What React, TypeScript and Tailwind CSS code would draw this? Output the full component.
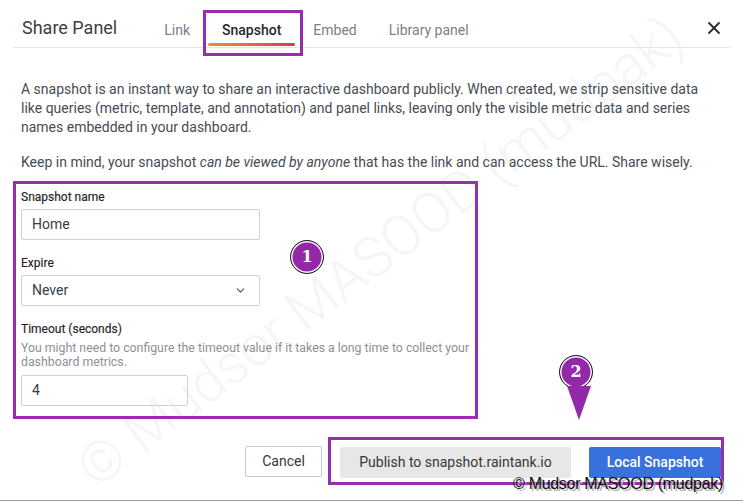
import { X, ChevronDown } from "lucide-react";

const tabs = ["Link", "Snapshot", "Embed", "Library panel"];

function Badge({ n }: { n: string }) {
  return (
    <div className="flex h-[34px] w-[34px] items-center justify-center rounded-full border border-[#222] bg-[#9328a8] shadow-[inset_0_0_0_1.5px_#ffffff] font-['DejaVu_Serif',serif] text-[16px] font-bold text-white">
      {n}
    </div>
  );
}

function Field({ label, children, hint }: { label: string; children: React.ReactNode; hint?: string }) {
  return (
    <div className="flex flex-col">
      <label className="text-[12px] leading-[16px] text-[#1f2226] [-webkit-text-stroke:0.15px_#1f2226]">{label}</label>
      {hint && (
        <p className="mt-[4px] w-[455px] text-[12.3px] leading-[14px] text-[#8d9096]">{hint}</p>
      )}
      <div className={hint ? "mt-[6px]" : "mt-[4px]"}>{children}</div>
    </div>
  );
}

export default function App() {
  return (
    <div className="relative h-[503px] w-[743px] overflow-hidden bg-white font-['Roboto',sans-serif] text-[#464c54]">
      {/* diagonal watermark */}
      <div className="pointer-events-none absolute left-[380px] top-[252px] -translate-x-1/2 -translate-y-1/2 -rotate-[37deg] whitespace-nowrap font-['Roboto',sans-serif] text-[56px] font-light text-[#f5f5f5]">
        © Mudsor MASOOD (mudpak)
      </div>

      <div className="relative flex flex-col">
        {/* header */}
        <div className="mx-[13px] flex h-[48px] items-end border-b border-[#e6e6e6]">
          <div className="flex h-[48px] flex-1 items-center pt-[8px]">
            <h1 className="pl-[9px] text-[18px] text-[#3c4046]">Share Panel</h1>
            <div className="ml-[31px] flex h-[40px] translate-y-[3px] items-stretch">
              {tabs.map((t) => (
                <div key={t} className={"relative flex items-center px-[16px] text-[14px] " + (t === "Snapshot" ? "font-medium text-[#24292e]" : "text-[#7b8087]")}>
                  {t}
                  {t === "Snapshot" && (
                    <>
                      <span className="absolute bottom-[4px] left-[2px] right-[2px] h-[3px] rounded-full bg-gradient-to-r from-[#f5873a] to-[#e0344c]" />
                      <span className="absolute -bottom-[6px] -left-[3px] -right-[6px] top-0 border-[3px] border-[#9a2dae]" />
                    </>
                  )}
                </div>
              ))}
            </div>
          </div>
          <button className="mb-[9px] mr-[6px] text-[#2a2d31]">
            <X size={20} strokeWidth={2.2} />
          </button>
        </div>

        {/* body */}
        <div className="mt-[32px] px-[21px] text-[14px] leading-[19px] text-[#464c54]">
          <p>
            A snapshot is an instant way to share an interactive dashboard publicly. When created, we strip sensitive data
            like queries (metric, template, and annotation) and panel links, leaving only the visible metric data and series
            names embedded in your dashboard.
          </p>
          <p className="mt-[16px]">
            Keep in mind, your snapshot <em>can be viewed by anyone</em> that has the link and can access the URL. Share wisely.
          </p>
        </div>

        {/* form */}
        <div className="relative ml-[13px] mt-[9px] flex w-[465px] flex-col gap-[15px] border-[3px] border-[#9a2dae] px-[5px] pb-[10px] pt-[5px]">
          <Field label="Snapshot name">
            <div className="flex h-[31px] w-[239px] items-center rounded-[2px] border border-[#cfd1d4] px-[10px] text-[14px] text-[#3a3e44]">Home</div>
          </Field>
          <Field label="Expire">
            <div className="flex h-[31px] w-[239px] items-center justify-between rounded-[2px] border border-[#cfd1d4] pl-[10px] pr-[12px] text-[14px] text-[#3a3e44]">
              Never
              <ChevronDown size={13} strokeWidth={2} className="text-[#555]" />
            </div>
          </Field>
          <Field label="Timeout (seconds)" hint="You might need to configure the timeout value if it takes a long time to collect your dashboard metrics.">
            <div className="flex h-[31px] w-[167px] items-center rounded-[2px] border border-[#cfd1d4] px-[10px] text-[14px] text-[#3a3e44]">4</div>
          </Field>
          <div className="absolute left-[274px] top-[56px]">
            <Badge n="1" />
          </div>
        </div>

        {/* footer buttons */}
        <div className="mr-[19px] mt-[18px] flex items-center justify-end gap-[6px]">
          <button className="h-[31px] w-[77px] rounded-[2px] border border-[#c7c9cc] bg-white text-[14px] text-[#34383e]">Cancel</button>
          <div className="relative flex items-center gap-[18px] border-[3px] border-[#9a2dae] pb-[4px] pl-[9px] pt-[7px]">
            <button className="h-[31px] w-[231px] rounded-[2px] bg-[#e7e7e7] text-[14px] text-[#34383e]">Publish to snapshot.raintank.io</button>
            <button className="h-[31px] w-[132px] rounded-[2px] bg-[#3871dc] text-[14px] font-medium text-white">Local Snapshot</button>
            <div className="absolute -top-[85px] left-[228px] flex flex-col items-center">
              <Badge n="2" />
              <svg width="24" height="34" viewBox="0 0 24 34" className="-mt-[3px] ml-[6px]">
                <polygon points="0,0 24,0 12,34" fill="#9328a8" />
              </svg>
            </div>
          </div>
        </div>
      </div>

      {/* corner watermark */}
      <div className="absolute left-[513px] top-[475px] font-['Liberation_Sans',sans-serif] text-[16px] leading-[18px] tracking-[-0.3px] text-[#111] [text-shadow:2px_2px_0_#b5b5b5]">
        © Mudsor MASOOD (mudpak)
      </div>
      <div className="absolute bottom-[2px] left-0 right-0 h-px bg-[#9a9a9a]" />
    </div>
  );
}
